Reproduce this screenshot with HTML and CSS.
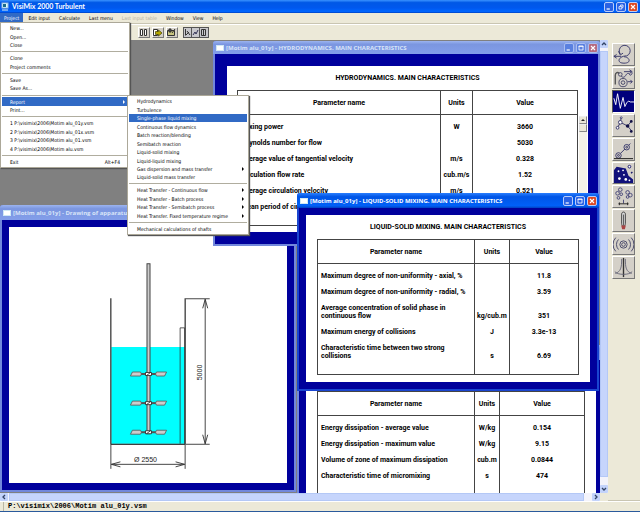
FILE: index.html
```html
<!DOCTYPE html>
<html lang="en">
<head>
<meta charset="utf-8">
<title>VisiMix 2000 Turbulent</title>
<link rel="stylesheet" href="styles.css">
</head>
<body>
<div class="app">
  <header class="titlebar">
    <svg class="app-icon" viewBox="0 0 8 9"><rect x="1" y="1" width="6" height="5" fill="#dff" stroke="#9bd"/><path d="M2 2h3v3H2z" fill="#1a6a8a"/><path d="M1 8h6" stroke="#dee"/></svg>
    <h1>VisiMix 2000 Turbulent</h1>
    <div class="controls">
      <button class="ctl" aria-label="Minimize"><svg viewBox="0 0 10 10"><path d="M2 7.5h4" stroke="#fff" stroke-width="1.5"/></svg></button>
      <button class="ctl" aria-label="Restore"><svg viewBox="0 0 10 10"><path d="M4.500 4V2.500h3v3H6.500M2.500 4.500h3.500v3H2.500z" fill="none" stroke="#fff"/></svg></button>
      <button class="ctl close" aria-label="Close"><svg viewBox="0 0 10 10"><path d="M2.500 2.500l5 5m0-5l-5 5" stroke="#fff" stroke-width="1.400"/></svg></button>
    </div>
  </header>

  <nav class="menubar">
    <button class="open">Project</button>
    <button>Edit input</button>
    <button>Calculate</button>
    <button>Last menu</button>
    <button disabled>Last input table</button>
    <button>Window</button>
    <button>View</button>
    <button>Help</button>
  </nav>

  <div class="toolbar">
    <button class="tool" aria-label="Columns"><svg viewBox="0 0 9 9"><path d="M1.500 1.500h2v6h-2zM5.500 1.500h2v6h-2z" fill="#fff" stroke="#333"/></svg></button>
    <button class="tool" aria-label="Export"><svg viewBox="0 0 9 9"><path d="M.5 1.500h4v6h-4z" fill="#fff" stroke="#333"/><path d="M2.500 3.500h3V2l3.500 3-3.500 3V6.500h-3z" fill="#b5a800" stroke="#443f00" stroke-width=".7"/></svg></button>
    <button class="tool" aria-label="Edit"><svg viewBox="0 0 9 9"><path d="M.5 2.500h7v5h-7z" fill="#c8c480" stroke="#333"/><path d="M2 1h2v3H2zM5 5l3-4" fill="#555" stroke="#333"/></svg></button>
    <div class="tool-group">
      <button class="mini" aria-label="Chart"><svg viewBox="0 0 7 9"><path d="M1.500 1v6.500M2 7l3-3M3 3l3 4" fill="none" stroke="#333"/></svg></button>
      <button class="mini" aria-label="Graph"><svg viewBox="0 0 7 9"><path d="M1 7l2-3 1 2 2-4" fill="none" stroke="#335"/></svg></button>
      <button class="mini" aria-label="Report"><svg viewBox="0 0 7 9"><path d="M1.500 1.500h4v6h-4zM3.500 2v5" fill="none" stroke="#333"/></svg></button>
    </div>
  </div>

  <main class="workspace">
    <div class="mdi">
      <div class="desktop">
        <section class="window inactive drawing">
          <div class="caption">
            <span class="doc-icon"></span><h2>[Motim alu_01y] - Drawing of apparatus</h2>
          </div>
          <div class="frame">
            <div class="page">
              <svg class="vessel" viewBox="9 227 277 255">
                <defs>
                  <g id="impeller" stroke="#555" stroke-width=".8">
                    <path d="M-9 0H9" stroke-width="2"/>
                    <path d="M-18 2l2-4h8l1 2-1 2zM7 0l1-2h10l-2 4H8z" fill="#ccc"/>
                    <path d="M-3-1.500h6v3h-6z" fill="#fff" stroke="#222"/>
                    <path d="M-2 1.500l4-3" stroke="#222"/>
                  </g>
                </defs>
                <path d="M111 346.500h73V443h-73z" fill="#0ff"/>
                <path d="M110.500 298v145.500h74V298" fill="none" stroke="#000"/>
                <path d="M179.500 443V327.500h4.500V443" fill="none" stroke="#333" stroke-width=".8"/>
                <path d="M146.500 263.500h3V433h-3z" fill="#ccc" stroke="#444"/>
                <use href="#impeller" x="148" y="373.500"/>
                <use href="#impeller" x="148" y="402.500"/>
                <use href="#impeller" x="148" y="431.500"/>
                <path d="M185 298.500h24M185 443.500h24M204.500 299v144M110.500 444v24M184.500 444v24M111 463.500h73" fill="none" stroke="#333" stroke-width=".9"/>
                <path d="M202 308l2.500-9 2.500 9M202 434l2.500 9 2.500-9M120 461l-9 2.500 9 2.500M175 461l9 2.500-9 2.500" fill="none" stroke="#333" stroke-width=".9"/>
                <text x="145" y="461" text-anchor="middle">Ø 2550</text>
                <text transform="translate(201 372) rotate(-90)" text-anchor="middle">5000</text>
              </svg>
            </div>
          </div>
        </section>

        <section class="window inactive hydro">
          <div class="caption">
            <span class="doc-icon"></span><h2>[Motim alu_01y] - HYDRODYNAMICS. MAIN CHARACTERISTICS</h2>
            <div class="controls">
              <button class="ctl" aria-label="Minimize"><svg viewBox="0 0 10 10"><path d="M2 7.500h4" stroke="#fff" stroke-width="1.500"/></svg></button>
              <button class="ctl" aria-label="Maximize"><svg viewBox="0 0 10 10"><path d="M2.500 2.500h5v5h-5zM2 3h6" fill="none" stroke="#fff"/></svg></button>
              <button class="ctl close" aria-label="Close"><svg viewBox="0 0 10 10"><path d="M2.500 2.500l5 5m0-5l-5 5" stroke="#fff" stroke-width="1.400"/></svg></button>
            </div>
          </div>
          <div class="frame">
            <div class="page">
              <h3>HYDRODYNAMICS. MAIN CHARACTERISTICS</h3>
              <table>
                <colgroup><col class="name"><col class="units"><col></colgroup>
                <thead><tr><th>Parameter name</th><th>Units</th><th>Value</th></tr></thead>
                <tbody>
                  <tr><td>Mixing power</td><td>W</td><td>3660</td></tr>
                  <tr><td>Reynolds number for flow</td><td></td><td>5030</td></tr>
                  <tr><td>Average value of tangential velocity</td><td>m/s</td><td>0.328</td></tr>
                  <tr><td>Circulation flow rate</td><td>cub.m/s</td><td>1.52</td></tr>
                  <tr><td>Average circulation velocity</td><td>m/s</td><td>0.521</td></tr>
                  <tr><td>Mean period of circulation</td><td>s</td><td>9.58</td></tr>
                </tbody>
              </table>
              <div class="list-scroll"><button class="list-up" aria-label="Scroll up"></button><span class="list-thumb"></span></div>
            </div>
          </div>
        </section>

        <section class="window inactive dissipation">
          <div class="caption">
            <span class="doc-icon"></span>
          </div>
          <div class="frame">
            <div class="page">
              <h3></h3>
              <table>
                <colgroup><col class="name"><col class="units"><col></colgroup>
                <thead><tr><th>Parameter name</th><th>Units</th><th>Value</th></tr></thead>
                <tbody>
                  <tr><td>Energy dissipation - average value</td><td>W/kg</td><td>0.154</td></tr>
                  <tr><td>Energy dissipation - maximum value</td><td>W/kg</td><td>9.15</td></tr>
                  <tr><td>Volume of zone of maximum dissipation</td><td>cub.m</td><td>0.0844</td></tr>
                  <tr><td>Characteristic time of micromixing</td><td>s</td><td>474</td></tr>
                </tbody>
              </table>
            </div>
          </div>
        </section>

        <section class="window solid">
          <div class="caption">
            <span class="doc-icon"></span><h2>[Motim alu_01y] - LIQUID-SOLID MIXING. MAIN CHARACTERISTICS</h2>
            <div class="controls">
              <button class="ctl" aria-label="Minimize"><svg viewBox="0 0 10 10"><path d="M2 7.500h4" stroke="#fff" stroke-width="1.500"/></svg></button>
              <button class="ctl" aria-label="Maximize"><svg viewBox="0 0 10 10"><path d="M2.500 2.500h5v5h-5zM2 3h6" fill="none" stroke="#fff"/></svg></button>
              <button class="ctl close" aria-label="Close"><svg viewBox="0 0 10 10"><path d="M2.500 2.500l5 5m0-5l-5 5" stroke="#fff" stroke-width="1.400"/></svg></button>
            </div>
          </div>
          <div class="frame">
            <div class="page">
              <h3>LIQUID-SOLID MIXING. MAIN CHARACTERISTICS</h3>
              <table>
                <colgroup><col class="name"><col class="units"><col></colgroup>
                <thead><tr><th>Parameter name</th><th>Units</th><th>Value</th></tr></thead>
                <tbody>
                  <tr><td>Maximum degree of non-uniformity - axial, %</td><td></td><td>11.8</td></tr>
                  <tr><td>Maximum degree of non-uniformity - radial, %</td><td></td><td>3.59</td></tr>
                  <tr><td>Average concentration of solid phase in<br>continuous flow</td><td>kg/cub.m</td><td>351</td></tr>
                  <tr><td>Maximum energy of collisions</td><td>J</td><td>3.3e-13</td></tr>
                  <tr><td>Characteristic time between two strong<br>collisions</td><td>s</td><td>6.69</td></tr>
                </tbody>
              </table>
            </div>
          </div>
        </section>
      </div>
      <div class="scroll vertical">
        <button aria-label="Scroll up"><svg viewBox="0 0 8 8"><path d="M2 5l2-2 2 2" fill="none" stroke="#346" stroke-width="1.300"/></svg></button>
        <span class="thumb"></span>
        <button aria-label="Scroll down"><svg viewBox="0 0 8 8"><path d="M2 3l2 2 2-2" fill="none" stroke="#346" stroke-width="1.300"/></svg></button>
      </div>
      <div class="scroll horizontal">
        <button aria-label="Scroll left"><svg viewBox="0 0 8 8"><path d="M5 2L3 4l2 2" fill="none" stroke="#346" stroke-width="1.300"/></svg></button>
        <span class="thumb"></span>
        <button aria-label="Scroll right"><svg viewBox="0 0 8 8"><path d="M3 2l2 2-2 2" fill="none" stroke="#346" stroke-width="1.300"/></svg></button>
      </div>
    </div>

    <aside class="palette">
      <div class="palette-buttons">
        <button aria-label="Circulation"><svg viewBox="0 0 23 23"><path d="M8 11a6 6 0 1 1 7 2M6 8l2 4 3-2M1 13.500h8M4 11.500l-3 2 3 2M15 13c-9 0-12 8-3 8s6-7 0-7" fill="none" stroke="#336"/></svg></button>
        <button aria-label="Turbulence"><svg viewBox="0 0 23 23"><path d="M2.500 18V8c0-3 3-4 4-2" fill="none" stroke="#555" stroke-width="1.500"/><path d="M9 9c2 2 4 1 5-1s3-3 4-1 3 0 3-2M12 4h8M18 2l3 2-3 2M16 15h5M19 13l2 2-2 2" fill="none" stroke="#336"/><g fill="none" stroke="#446"><circle cx="11" cy="16" r="4.500"/><circle cx="11" cy="16" r="2"/><circle cx="8" cy="7" r="2"/></g></svg></button>
        <button class="selected" aria-label="Fluctuations"><svg viewBox="0 0 23 23"><path d="M1 8l2 7L5 3l3 16 3-12 2 10 2-4 2-2 2 1h4" fill="none" stroke="#fff"/></svg></button>
        <button aria-label="Reaction"><svg viewBox="0 0 23 23"><path d="M5 14l3-6 8 4 4-5M16 12l4 5M8 8l1-5" fill="none" stroke="#336"/><g fill="#fff" stroke="#336"><circle cx="5" cy="14" r="1.500"/><circle cx="8" cy="8" r="2"/><circle cx="9" cy="3" r="1"/></g><g fill="#114"><circle cx="16" cy="12" r="2"/><circle cx="20" cy="7" r="1.500"/><circle cx="20" cy="18" r="1.500"/></g></svg></button>
        <button aria-label="Particles"><svg viewBox="0 0 23 23"><g fill="none" stroke="#336"><circle cx="6" cy="18" r="3"/><circle cx="6" cy="18" r="1"/><circle cx="15" cy="9" r="3"/><circle cx="15" cy="9" r="1"/><path d="M8.500 15.500L13 11M17 7l2-2"/></g><path d="M1 21.500h21" stroke="#111"/></svg></button>
        <button aria-label="Solids"><svg viewBox="0 0 23 23"><path d="M1 22V8l3-4 10 2 3 8 5 4v4z" fill="#11117a"/><g fill="#fff"><circle cx="6" cy="9" r="1"/><circle cx="11" cy="8" r="1"/><circle cx="7" cy="17" r="1.500"/><circle cx="14" cy="18" r="1.500"/><circle cx="18" cy="19" r="1"/><circle cx="12" cy="13" r="1"/></g><circle cx="18" cy="4" r="1.500" fill="#fff" stroke="#116"/><path d="M20 10l1 1" stroke="#116" stroke-width="2"/></svg></button>
        <button aria-label="Droplets"><svg viewBox="0 0 23 23"><g fill="none" stroke="#447"><circle cx="8" cy="4" r="2"/><circle cx="5" cy="8" r="2"/><circle cx="9" cy="9" r="1.500"/><circle cx="6" cy="13" r="1.500"/><circle cx="16" cy="7" r="2"/><circle cx="19" cy="10" r="2"/><circle cx="16" cy="12" r="1.500"/><path d="M11.500 15v4"/></g><path d="M6 19.500h11M7 18v3m9-3v3" stroke="#222"/></svg></button>
        <button aria-label="Heat transfer"><svg viewBox="0 0 23 23"><path d="M9.500 4.500c0-3 4-3 4 0v10c0 2-1 3-1 3h-2s-1-1-1-3z" fill="#ddd" stroke="#333"/><path d="M11.500 5v12" stroke="#555"/><path d="M9 17h5l-1 4h-3z" fill="#a44"/></svg></button>
        <button aria-label="Vibration"><svg viewBox="0 0 23 23"><g fill="none" stroke="#446"><circle cx="11.500" cy="11.500" r="2"/><circle cx="11.500" cy="11.500" r="4"/><path d="M6 6a8 8 0 0 0 0 11M17 6a8 8 0 0 1 0 11M3 4a11 11 0 0 0 0 15M20 4a11 11 0 0 1 0 15"/></g></svg></button>
        <button aria-label="Shaft"><svg viewBox="0 0 23 23"><path d="M11.500 1v21" stroke="#333" stroke-width="1.500"/><path d="M9.500 2c0 10-1 14-7 16M13.500 2c0 10 1 14 7 16M2 16c3 4 16 4 19 0" fill="none" stroke="#667"/></svg></button>
      </div>
    </aside>
  </main>

  <footer class="statusbar"><span>P:\visimix\2006\Motim alu_01y.vsm</span></footer>

  <ul class="menu project-menu">
    <li><button>New...</button></li>
    <li><button>Open...</button></li>
    <li><button>Close</button></li>
    <li class="sep"></li>
    <li><button>Clone</button></li>
    <li><button>Project comments</button></li>
    <li class="sep"></li>
    <li><button>Save</button></li>
    <li><button>Save As...</button></li>
    <li class="sep"></li>
    <li><button class="sub active">Report</button></li>
    <li><button>Print...</button></li>
    <li class="sep"></li>
    <li><button>1 P:\visimix\2006\Motim alu_01y.vsm</button></li>
    <li><button>2 P:\visimix\2006\Motim alu_01x.vsm</button></li>
    <li><button>3 P:\visimix\2006\Motim alu_01.vsm</button></li>
    <li><button>4 P:\visimix\2006\Motim alu.vsm</button></li>
    <li class="sep"></li>
    <li><button>Exit<span class="key">Alt+F4</span></button></li>
  </ul>

  <ul class="menu report-menu">
    <li><button>Hydrodynamics</button></li>
    <li><button>Turbulence</button></li>
    <li><button class="active">Single-phase liquid mixing</button></li>
    <li><button>Continuous flow dynamics</button></li>
    <li><button>Batch reaction/blending</button></li>
    <li><button>Semibatch reaction</button></li>
    <li><button>Liquid-solid mixing</button></li>
    <li><button>Liquid-liquid mixing</button></li>
    <li><button class="sub">Gas dispersion and mass transfer</button></li>
    <li><button>Liquid-solid mass transfer</button></li>
    <li class="sep"></li>
    <li><button class="sub">Heat Transfer - Continuous flow</button></li>
    <li><button class="sub">Heat Transfer - Batch process</button></li>
    <li><button class="sub">Heat Transfer - Semibatch process</button></li>
    <li><button class="sub">Heat Transfer. Fixed temperature regime</button></li>
    <li class="sep"></li>
    <li><button>Mechanical calculations of shafts</button></li>
  </ul>
</div>
</body>
</html>
```
FILE: styles.css
```css
:root {
  --face: #ece9d8;
  --navy: #00009c;
  --select: #316ac5;
  --ui: "DejaVu Sans Condensed", "DejaVu Sans", sans-serif;
  --title: Lato, "Liberation Sans", sans-serif;
  --caption: "Open Sans", "Liberation Sans", sans-serif;
  --doc: Roboto, "Liberation Sans", sans-serif;
}

* { box-sizing: border-box; }

body { margin: 0; font: 5px/8px var(--ui); color: #000; }

h1, h2, h3, ul { margin: 0; padding: 0; list-style: none; }

button {
  margin: 0;
  padding: 0;
  border: 0;
  background: none;
  color: inherit;
  font: inherit;
  white-space: nowrap;
}

svg { display: block; }

.app {
  position: relative;
  display: flex;
  flex-direction: column;
  height: 100vh;
  overflow: hidden;
  background: var(--face);
}

/* Title bar */
.titlebar {
  display: flex;
  align-items: center;
  gap: 3px;
  height: 13px;
  padding: 0 2px 0 1px;
  background: linear-gradient(#3a93ff, #0058e6 20%, #0058ee 60%, #0066ff 88%, #0040c0);
  color: #fff;
}

.app-icon { width: 8px; height: 9px; }

h1 { flex: 1; font: bold 7px/9px var(--title); }

.controls { display: flex; gap: 2px; margin-left: auto; }

.ctl {
  width: 10px;
  height: 10px;
  border: 1px solid #b9cdfa;
  border-radius: 2px;
  background: #2a62e4;
}

.ctl svg { width: 8px; height: 8px; }
.ctl.close { background: #dc4a24; }

/* Menu bar and toolbar */
.menubar {
  display: flex;
  gap: 1px;
  height: 11px;
  border-bottom: 1px solid #c9c5b2;
}

.menubar button { padding: 0 4px; }
.menubar .open { background: var(--select); color: #fff; }
.menubar button:disabled { color: #b5b1a0; }

.toolbar {
  display: flex;
  align-items: center;
  gap: 2px;
  height: 16px;
  padding-left: 138px;
  border-top: 1px solid #fff;
}

.tool, .palette button {
  border: 1px solid;
  border-color: #fff #777 #777 #fff;
  background: #d4d0c8;
}

.tool { width: 12px; height: 11px; }
.tool svg { width: 9px; height: 9px; }

.tool-group {
  display: flex;
  margin-left: 3px;
  border: 1px solid #555;
  background: #c8c8cc;
}

.mini { width: 8px; height: 9px; border-right: 1px solid #555; }
.mini:last-child { border: 0; }
.mini svg { width: 7px; height: 9px; }

/* Work area */
.workspace { display: flex; flex: 1; min-height: 0; }

.mdi {
  flex: 1;
  display: grid;
  grid-template: 1fr 8px / 1fr 8px;
  min-width: 0;
}

.desktop { position: relative; overflow: hidden; background: #808080; }

.window {
  position: absolute;
  border: 2px solid #1a45d0;
  border-top: 0;
  border-radius: 3px 3px 0 0;
  background: var(--navy);
}

.caption {
  display: flex;
  align-items: center;
  gap: 2px;
  height: 15px;
  margin: 0 -2px;
  padding: 0 2px 0 3px;
  border-radius: 3px 3px 0 0;
  background: linear-gradient(#2a7fff, #0055e6 25%, #0060f8 85%, #0040c0);
  color: #fff;
}

.inactive { border-color: #7288dc; }
.inactive .caption { background: linear-gradient(#9cb4f0, #7b96e0 25%, #839eea); color: #d8e4f8; }
.inactive .ctl { background: #5a80e0; border-color: #a9bdf0; }
.inactive .close { background: #b56a80; }

.doc-icon { width: 8px; height: 6px; background: #fff; border: 1px solid #cfe8f4; }

h2 { font: bold 6px/8px var(--caption); white-space: nowrap; }

.frame { padding: 7px; }
.page { position: relative; padding: 0 11px; background: #fff; height: 167px; }

.hydro { left: 213px; top: 1px; width: 387px; }
.hydro .caption { height: 13px; }
.hydro .frame { padding: 12px 10px 12px 12px; }
.hydro .page { height: 166px; padding: 0 10px; }
.hydro .name { width: 203px; }
.hydro .units { width: 32px; }

.drawing { left: 0; top: 165px; width: 296px; }
.drawing .page { height: auto; padding: 0; }

.dissipation { left: 297px; top: 305px; width: 308px; }
.dissipation .name { width: 157px; }
.dissipation .units { width: 25px; }

.solid { left: 297px; top: 153px; width: 302px; }
.solid .name { width: 157px; }
.solid .units { width: 35px; }

h3 { height: 24px; font: bold 7px/24px var(--doc); text-align: center; }

table {
  width: 100%;
  table-layout: fixed;
  border-collapse: collapse;
  border: 1px solid #444;
  font: bold 7px/8px var(--doc);
}

th { height: 24px; padding: 0; border: 1px solid #444; }

td {
  padding: 0 0 8px;
  border: solid #444;
  border-width: 0 1px;
  text-align: center;
  vertical-align: bottom;
  white-space: nowrap;
}

td:first-child { padding-left: 3px; text-align: left; }
tbody tr:first-child td { padding-top: 8px; }
tbody tr:last-child td { padding-bottom: 14px; }

.list-scroll {
  position: absolute;
  top: 50px;
  right: 1px;
  bottom: 8px;
  width: 8px;
  background: #f4f1e8;
}

.list-up, .list-thumb {
  display: block;
  width: 8px;
  height: 8px;
  border: 1px solid;
  border-color: #eee #888 #888 #ddd;
  background: var(--face);
}

.list-up::before {
  content: "";
  display: block;
  margin: 0 1px;
  border: 2px solid transparent;
  border-top: 0;
  border-bottom: 2px solid #222;
}

.vessel { width: 100%; }
.vessel text { font: 7px "Liberation Sans", sans-serif; fill: #222; }

/* Scroll bars */
.scroll { display: flex; background: #f3f3fb; }
.scroll button { width: 8px; height: 8px; border-radius: 1px; background: #c3d3fb; }
.scroll svg { width: 8px; height: 8px; }
.thumb { flex: 1; border: 1px solid #b4c8f6; background: #c6d5fc; }
.vertical { flex-direction: column; }
.vertical .thumb { margin: 3px 0 8px; }
.horizontal .thumb { margin: 0 8px 0 1px; }

/* Module palette */
.palette {
  width: 32px;
  padding: 3px 4px;
  border-bottom: 1px solid #c9c5b2;
}

.palette-buttons {
  display: flex;
  flex-direction: column;
  gap: 1px;
  height: 236px;
}

.palette button { flex: 1; width: 23px; min-height: 0; }
.palette svg { width: 21px; height: 21px; }
.palette .selected { background: #00007c; border-color: #555 #fff #fff #555; }

.statusbar {
  height: 11px;
  padding-left: 3px;
  border-top: 1px solid #fff;
  border-bottom: 1px solid #2a5a9c;
}

.statusbar span {
  display: block;
  padding-left: 4px;
  border-left: 1px solid #bbb7a4;
  font: bold 7px/9px "Liberation Mono", monospace;
}

/* Pop-up menus */
.menu {
  position: absolute;
  display: flex;
  flex-direction: column;
  padding: 1px;
  border: 1px solid #aca899;
  background: #fff;
  box-shadow: 1px 1px 1px #555;
}

.menu li { display: flex; flex: 17 1 0; min-height: 0; }
.menu .sep { flex: 9 1 0; align-items: center; }
.menu .sep::before { content: ""; flex: 1; height: 1px; background: #b0ad9f; }

.menu button {
  flex: 1;
  display: flex;
  align-items: center;
  justify-content: space-between;
  padding: 0 3px 0 8px;
  text-align: left;
}

.menu .active { background: var(--select); color: #fff; }

.menu .sub::after {
  content: "";
  border: 2px solid transparent;
  border-left-color: currentColor;
  border-right: 0;
}

.key { padding-right: 5px; }

.project-menu { left: 0; top: 22px; width: 130px; height: 146px; }
.report-menu { left: 127px; top: 95px; width: 122px; height: 140px; }
```
